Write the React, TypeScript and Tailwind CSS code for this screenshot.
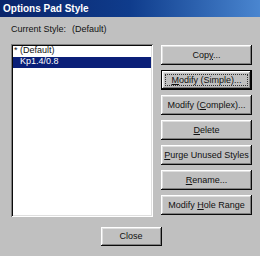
import React from "react";

const raised =
  "shadow-[inset_-1px_-1px_#0a0a0a,inset_1px_1px_#ffffff,inset_-2px_-2px_#808080,inset_2px_2px_#dfdfdf]";

function Btn({
  pre,
  u,
  post,
  isDefault,
}: {
  pre?: string;
  u?: string;
  post?: string;
  isDefault?: boolean;
}) {
  const label = (
    <span className="leading-[10px]">
      {pre}
      {u && <span className="underline underline-offset-1">{u}</span>}
      {post}
    </span>
  );
  if (isDefault) {
    return (
      <div className="flex h-[20px] w-[91px] border border-black bg-[#c0c0c0]">
        <div className={`flex h-full w-full p-[3px] ${raised}`}>
          <div className="flex h-full w-full items-center justify-center border border-dotted border-[#333]">
            {label}
          </div>
        </div>
      </div>
    );
  }
  return (
    <div className={`flex h-[20px] w-[91px] items-center justify-center bg-[#c0c0c0] ${raised}`}>
      {label}
    </div>
  );
}

export default function App() {
  return (
    <div
      className="flex h-[256px] w-[260px] flex-col bg-[#c0c0c0] text-[9px] text-[#111]"
      style={{ fontFamily: '"Liberation Sans", Arial, sans-serif' }}
    >
      <div className="flex h-[17px] items-center bg-gradient-to-r from-[#0a246a] via-[#0f3c8c] to-[#4a86d0] pl-[3px]">
        <span className="text-[10px] font-bold text-white">Options Pad Style</span>
      </div>
      <div className="flex items-center pl-[11px] pt-[6px]">
        <span className="w-[61px]">Current Style:</span>
        <span>(Default)</span>
      </div>
      <div className="flex gap-[8px] pl-[11px] pt-[7px]">
        <div className="h-[173px] w-[142px] bg-white p-[2px] shadow-[inset_1px_1px_#808080,inset_-1px_-1px_#ffffff,inset_2px_2px_#0a0a0a,inset_-2px_-2px_#dfdfdf]">
          <div className="flex h-[11px] items-center pl-[1px]">* (Default)</div>
          <div className="flex h-[11px] items-center bg-[#0a1f78] pl-[7px] text-white">Kp1.4/0.8</div>
        </div>
        <div className="flex flex-col gap-[5px] pt-[1px]">
          <Btn pre="Cop" u="y" post="..." />
          <Btn u="M" post="odify (Simple)..." isDefault />
          <Btn pre="Modify (" u="C" post="omplex)..." />
          <Btn u="D" post="elete" />
          <Btn u="P" post="urge Unused Styles" />
          <Btn u="R" post="ename..." />
          <Btn pre="Modify " u="H" post="ole Range" />
        </div>
      </div>
      <div className="flex justify-center pl-[2px] pt-[10px]">
        <div className={`flex h-[19px] w-[61px] items-center justify-center ${raised}`}>
          <span className="leading-[10px]">Close</span>
        </div>
      </div>
    </div>
  );
}
